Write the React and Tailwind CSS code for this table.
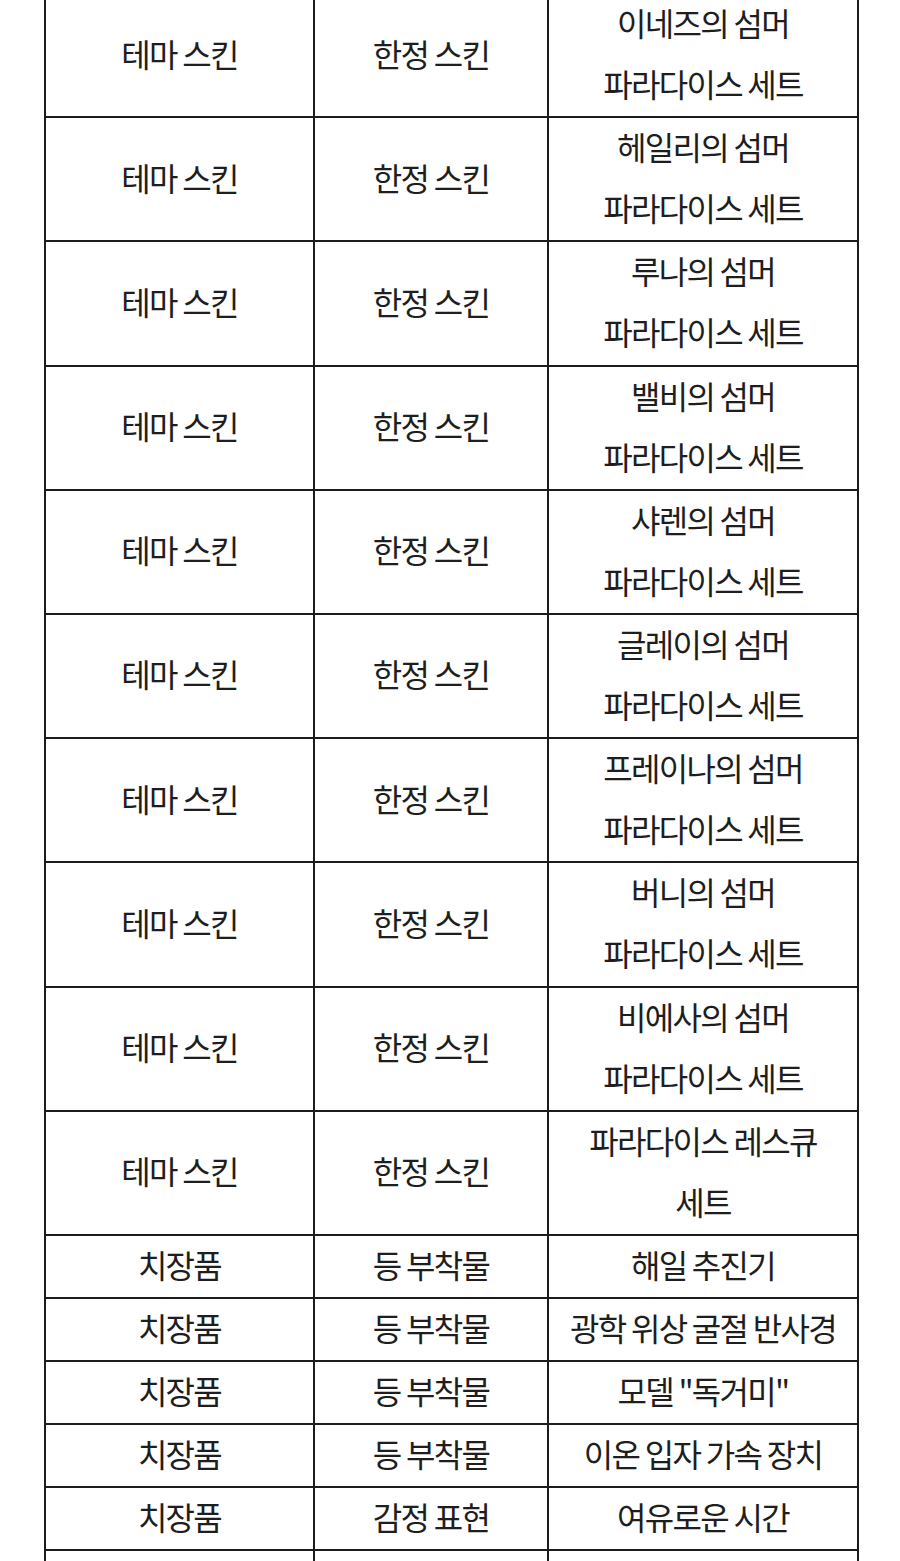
import React from "react";

const names = [
  ["이네즈의 섬머", "파라다이스 세트"],
  ["헤일리의 섬머", "파라다이스 세트"],
  ["루나의 섬머", "파라다이스 세트"],
  ["밸비의 섬머", "파라다이스 세트"],
  ["샤렌의 섬머", "파라다이스 세트"],
  ["글레이의 섬머", "파라다이스 세트"],
  ["프레이나의 섬머", "파라다이스 세트"],
  ["버니의 섬머", "파라다이스 세트"],
  ["비에사의 섬머", "파라다이스 세트"],
  ["파라다이스 레스큐", "세트"],
];

const rows = [
  ...names.map((n) => ["테마 스킨", "한정 스킨", n]),
  ["치장품", "등 부착물", ["해일 추진기"]],
  ["치장품", "등 부착물", ["광학 위상 굴절 반사경"]],
  ["치장품", "등 부착물", ['모델 "독거미"']],
  ["치장품", "등 부착물", ["이온 입자 가속 장치"]],
  ["치장품", "감정 표현", ["여유로운 시간"]],
  ["치장품", "감정 표현", ["즐거운 휴가"]],
];

const cell =
  "border-2 border-[#1c1c1c] text-center align-middle whitespace-nowrap p-0";

export default function App() {
  return (
    <div
      className="w-[900px] h-[1561px] overflow-hidden bg-white"
      style={{ fontFamily: '"Noto Sans CJK KR", "Noto Sans", sans-serif' }}
    >
      <table className="mt-[-8px] ml-[44px] w-[815px] table-fixed border-collapse text-[32px] leading-[61.1px] tracking-[-1.7px] text-[#1e1e1e]">
        <colgroup>
          <col className="w-[269px]" />
          <col className="w-[234px]" />
          <col className="w-[310px]" />
        </colgroup>
        <tbody>
          {rows.map((r, i) => (
            <tr key={i}>
              <td className={cell}>
                <div className="-translate-y-[2px]">{r[0]}</div>
              </td>
              <td className={cell}>
                <div className="-translate-y-[2px]">{r[1]}</div>
              </td>
              <td className={cell}>
                <div className="-translate-y-[2px]">
                  {r[2].map((line, j) => (
                    <div key={j}>{line}</div>
                  ))}
                </div>
              </td>
            </tr>
          ))}
        </tbody>
      </table>
    </div>
  );
}
